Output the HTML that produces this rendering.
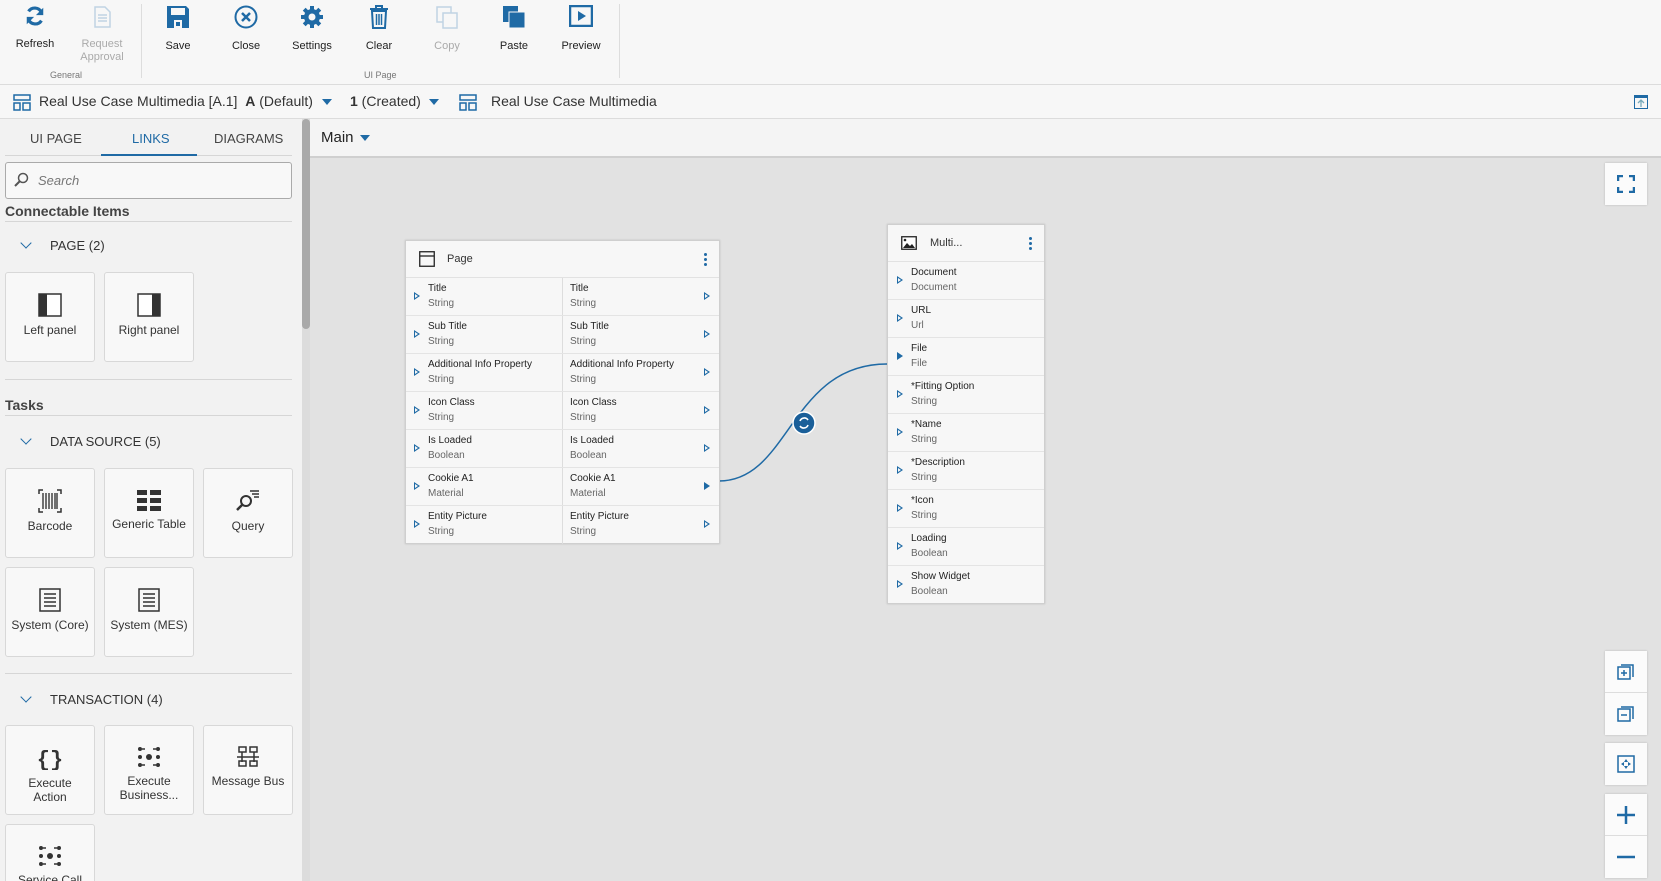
<!DOCTYPE html>
<html style="overflow:hidden;height:881px"><head><meta charset="utf-8"><style>
*{box-sizing:border-box;margin:0;padding:0}
body{width:1661px;height:881px;overflow:hidden;background:#f2f2f2;font-family:"Liberation Sans",sans-serif;color:#333;position:relative}
.a{position:absolute}
.tb{left:0;top:0;width:1661px;height:85px;background:#f7f7f7;border-bottom:1px solid #dcdcdc}
.btn{position:absolute;top:0;width:66px;text-align:center;font-size:11px;color:#222}
.btn svg{display:block;margin:5px auto 0}
.btn span{display:block;margin-top:11px;line-height:13px}
.dis{color:#aaa}
.glab{font-size:9px;color:#777}
.tbar{left:0;top:85px;width:1661px;height:34px;background:#f7f7f7;border-bottom:1px solid #dcdcdc;font-size:14px}
.left{left:0;top:119px;width:302px;height:762px;background:#f2f2f2;overflow:hidden}
.tab{position:absolute;top:12px;font-size:13px;color:#444}
.tile{position:absolute;width:90px;height:90px;background:#f8f8f8;border:1px solid #d8d8d8;border-radius:3px;text-align:center;font-size:12px;color:#333;line-height:14px}
.tile svg{display:block;margin:20px auto 6px}
.sec{position:absolute;left:20px;font-size:13px;color:#333}
.sec i{display:inline-block;width:8px;height:8px;border-right:1.5px solid #1f6aa5;border-bottom:1.5px solid #1f6aa5;transform:rotate(45deg);margin:0 20px 3px 2px}
.hr{position:absolute;left:5px;width:287px;height:1px;background:#d6d6d6}
.canvas{left:310px;top:156px;width:1351px;height:725px;background:#e2e2e2;border-top:2px solid #cfcfcf}
.node{position:absolute;background:#f7f7f7;border:1px solid #cfcfcf;box-shadow:0 0 2px rgba(0,0,0,.15)}
.nh{height:37px;border-bottom:1px solid #e2e2e2;font-size:11px;position:relative}
.row{height:38px;border-bottom:1px solid #e4e4e4;position:relative;font-size:10px}
.row b{font-weight:normal;position:absolute;top:5px;color:#222}
.row em{font-style:normal;position:absolute;top:20px;color:#666}
.tri{position:absolute;top:14px;width:0;height:0;border-top:4px solid transparent;border-bottom:4px solid transparent;border-left:6px solid #1f6aa5}
.tri.o::after{content:"";position:absolute;left:-5px;top:-2.5px;border-top:2.5px solid transparent;border-bottom:2.5px solid transparent;border-left:3.5px solid #f7f7f7}
.cb{position:absolute;left:1605px;width:42px;background:#fbfbfb;box-shadow:0 0 2px rgba(0,0,0,.2)}
.cb div{height:42px;display:flex;align-items:center;justify-content:center}
.kb{position:absolute;right:12px;top:12px;width:3px}
.kb i{display:block;width:3px;height:3px;background:#1f6aa5;border-radius:50%;margin-bottom:2px}
</style></head><body>
<div class="a tb">
 <div class="btn" style="left:2px"><svg width="22" height="22" viewBox="0 0 24 24"><path d="M19 8A8 8 0 0 0 5 7" stroke="#1f6aa5" stroke-width="3.5" fill="none"/><path d="M21 3v8h-8z" fill="#1f6aa5"/><path d="M5 16a8 8 0 0 0 14 1" stroke="#1f6aa5" stroke-width="3.5" fill="none"/><path d="M3 21v-8h8z" fill="#1f6aa5"/></svg><span>Refresh</span></div>
 <div class="btn dis" style="left:69px"><svg width="22" height="24" viewBox="0 0 22 24"><path d="M4 2h10l5 5v15H4z" fill="none" stroke="#c0d4e4" stroke-width="1.5"/><path d="M7 10h9M7 13h9M7 16h9" stroke="#c0d4e4" stroke-width="1.5"/></svg><span style="margin-top:9px">Request<br>Approval</span></div>
 <div class="a glab" style="left:50px;top:70px">General</div>
 <div class="a" style="left:141px;top:4px;width:1px;height:74px;background:#ddd"></div>
 <div class="btn" style="left:145px"><svg width="24" height="24" viewBox="0 0 24 24"><path d="M1 1h19l3 3v19H1z" fill="#1f6aa5"/><rect x="5" y="3" width="14" height="7" fill="#f7f7f7"/><rect x="8" y="15" width="8" height="8" fill="#f7f7f7"/><rect x="10" y="17" width="4" height="4" fill="#1f6aa5"/></svg><span>Save</span></div>
 <div class="btn" style="left:213px"><svg width="24" height="24" viewBox="0 0 24 24"><circle cx="12" cy="12" r="10.5" fill="none" stroke="#1f6aa5" stroke-width="2"/><path d="M8 8l8 8M16 8l-8 8" stroke="#1f6aa5" stroke-width="2.5"/></svg><span>Close</span></div>
 <div class="btn" style="left:279px"><svg width="24" height="24" viewBox="0 0 24 24"><circle cx="12" cy="12" r="8" fill="#1f6aa5"/><g stroke="#1f6aa5" stroke-width="4"><path d="M12 1v22M1 12h22M4.2 4.2l15.6 15.6M19.8 4.2L4.2 19.8"/></g><circle cx="12" cy="12" r="3.5" fill="#f7f7f7"/></svg><span>Settings</span></div>
 <div class="btn" style="left:346px"><svg width="22" height="24" viewBox="0 0 22 24"><path d="M2 4h18M8 4V1h6v3" stroke="#1f6aa5" stroke-width="2" fill="none"/><path d="M4 6h14l-1 17H5z" fill="none" stroke="#1f6aa5" stroke-width="2"/><path d="M8.5 9v11M11 9v11M13.5 9v11" stroke="#1f6aa5" stroke-width="1.5"/></svg><span>Clear</span></div>
 <div class="btn dis" style="left:414px"><svg width="24" height="24" viewBox="0 0 24 24"><rect x="2" y="2" width="14" height="15" fill="none" stroke="#c0d4e4" stroke-width="1.5"/><rect x="8" y="8" width="14" height="15" fill="#f7f7f7" stroke="#c0d4e4" stroke-width="1.5"/></svg><span>Copy</span></div>
 <div class="btn" style="left:481px"><svg width="24" height="24" viewBox="0 0 24 24"><rect x="1" y="1" width="15" height="16" fill="#1f6aa5"/><rect x="7" y="7" width="16" height="16" fill="#1f6aa5" stroke="#f7f7f7" stroke-width="1"/></svg><span>Paste</span></div>
 <div class="btn" style="left:548px"><svg width="24" height="22" viewBox="0 0 24 22"><rect x="1" y="1" width="22" height="20" fill="none" stroke="#1f6aa5" stroke-width="2.5"/><path d="M9 6v10l8-5z" fill="#1f6aa5"/></svg><span style="margin-top:13px">Preview</span></div>
 <div class="a glab" style="left:364px;top:70px">UI Page</div>
 <div class="a" style="left:619px;top:4px;width:1px;height:74px;background:#ddd"></div>
</div>
<div class="a tbar">
 <svg class="a" style="left:13px;top:9px" width="18" height="17" viewBox="0 0 18 17"><g fill="none" stroke="#1f6aa5" stroke-width="1.5"><rect x="1" y="1" width="16" height="5"/><rect x="1" y="9" width="6" height="7"/><rect x="10" y="9" width="7" height="7"/></g></svg>
 <div class="a" style="left:39px;top:8px">Real Use Case Multimedia [A.1]&nbsp;&nbsp;<b>A</b> (Default)</div>
 <div class="a" style="left:322px;top:14px;border-left:5px solid transparent;border-right:5px solid transparent;border-top:6px solid #1f6aa5"></div>
 <div class="a" style="left:350px;top:8px"><b>1</b> (Created)</div>
 <div class="a" style="left:429px;top:14px;border-left:5px solid transparent;border-right:5px solid transparent;border-top:6px solid #1f6aa5"></div>
 <svg class="a" style="left:459px;top:9px" width="18" height="17" viewBox="0 0 18 17"><g fill="none" stroke="#1f6aa5" stroke-width="1.5"><rect x="1" y="1" width="16" height="5"/><rect x="1" y="9" width="6" height="7"/><rect x="10" y="9" width="7" height="7"/></g></svg>
 <div class="a" style="left:491px;top:8px">Real Use Case Multimedia</div>
 <svg class="a" style="left:1634px;top:10px" width="14" height="14" viewBox="0 0 14 14"><rect x=".5" y=".5" width="13" height="13" fill="none" stroke="#1f6aa5"/><rect x="0" y="0" width="14" height="3" fill="#1f6aa5"/><path d="M7 12V5M4 8l3-3 3 3" stroke="#7ab" fill="none" stroke-width="1.3"/></svg>
</div>
<div class="a left">
 <div class="tab" style="left:30px">UI PAGE</div>
 <div class="tab" style="left:132px;color:#1f6aa5">LINKS</div>
 <div class="tab" style="left:214px">DIAGRAMS</div>
 <div class="a" style="left:5px;top:36px;width:287px;height:1px;background:#d6d6d6"></div>
 <div class="a" style="left:101px;top:35px;width:96px;height:2px;background:#1f6aa5"></div>
 <div class="a" style="left:5px;top:43px;width:287px;height:37px;border:1px solid #aaa;border-radius:3px;background:#f8f8f8"></div>
 <svg class="a" style="left:13px;top:53px" width="16" height="16" viewBox="0 0 16 16"><circle cx="10" cy="6" r="4.5" fill="none" stroke="#555" stroke-width="1.5"/><path d="M7 9l-5 5" stroke="#555" stroke-width="2"/></svg>
 <div class="a" style="left:38px;top:54px;font-size:13px;font-style:italic;color:#777">Search</div>
 <div class="a" style="left:5px;top:84px;font-size:14px;font-weight:bold;color:#444">Connectable Items</div>
 <div class="hr" style="top:102px"></div>
 <div class="sec" style="top:119px"><i></i>PAGE (2)</div>
 <div class="tile" style="left:5px;top:153px"><svg width="24" height="24" viewBox="0 0 24 24"><rect x="1" y="1" width="22" height="22" fill="#fff" stroke="#333" stroke-width="1.5"/><rect x="1" y="1" width="8" height="22" fill="#333"/></svg>Left panel</div>
 <div class="tile" style="left:104px;top:153px"><svg width="24" height="24" viewBox="0 0 24 24"><rect x="1" y="1" width="22" height="22" fill="#fff" stroke="#333" stroke-width="1.5"/><rect x="15" y="1" width="8" height="22" fill="#333"/></svg>Right panel</div>
 <div class="hr" style="top:260px"></div>
 <div class="a" style="left:5px;top:278px;font-size:14px;font-weight:bold;color:#444">Tasks</div>
 <div class="hr" style="top:296px"></div>
 <div class="sec" style="top:315px"><i></i>DATA SOURCE (5)</div>
 <div class="tile" style="left:5px;top:349px"><svg width="24" height="24" viewBox="0 0 24 24"><path d="M1 5V1h4M19 1h4v4M23 19v4h-4M5 23H1v-4" stroke="#333" fill="none" stroke-width="1.5"/><path d="M5 4v16M8 4v16M11 4v16M14 4v16M17 4v16M19 4v16" stroke="#444" stroke-width="1.5"/></svg>Barcode</div>
 <div class="tile" style="left:104px;top:349px"><svg width="24" height="22" viewBox="0 0 24 22" fill="#333"><rect x="0" y="1" width="10" height="5"/><rect x="13" y="1" width="11" height="5"/><rect x="0" y="9" width="10" height="5"/><rect x="13" y="9" width="11" height="5"/><rect x="0" y="17" width="10" height="5"/><rect x="13" y="17" width="11" height="5"/></svg>Generic Table</div>
 <div class="tile" style="left:203px;top:349px"><svg width="24" height="24" viewBox="0 0 24 24"><circle cx="10" cy="12" r="5" fill="none" stroke="#333" stroke-width="2"/><path d="M6.5 15.5L1 21" stroke="#333" stroke-width="2.5"/><path d="M14 2h9M16 5h7M18 8h5" stroke="#333" stroke-width="1.5"/></svg>Query</div>
 <div class="tile" style="left:5px;top:448px"><svg width="22" height="24" viewBox="0 0 22 24"><rect x="1" y="1" width="20" height="22" fill="none" stroke="#333" stroke-width="1.5"/><path d="M5 6h12M5 10h12M5 14h12M5 18h12" stroke="#333" stroke-width="1.5"/></svg>System (Core)</div>
 <div class="tile" style="left:104px;top:448px"><svg width="22" height="24" viewBox="0 0 22 24"><rect x="1" y="1" width="20" height="22" fill="none" stroke="#333" stroke-width="1.5"/><path d="M5 6h12M5 10h12M5 14h12M5 18h12" stroke="#333" stroke-width="1.5"/></svg>System (MES)</div>
 <div class="hr" style="top:554px"></div>
 <div class="sec" style="top:573px"><i></i>TRANSACTION (4)</div>
 <div class="tile" style="left:5px;top:606px"><svg width="24" height="24" viewBox="0 0 24 24"><text x="12" y="20" font-size="22" font-weight="bold" text-anchor="middle" fill="#333" font-family="Liberation Mono">{}</text></svg>Execute<br>Action</div>
 <div class="tile" style="left:104px;top:606px"><svg width="24" height="22" viewBox="0 0 24 22"><g fill="#333"><circle cx="3" cy="11" r="2"/><circle cx="21" cy="11" r="2"/><circle cx="12" cy="11" r="3"/><circle cx="3" cy="3" r="2"/><circle cx="21" cy="19" r="2"/><circle cx="3" cy="19" r="2"/><circle cx="21" cy="3" r="2"/></g><path d="M5 3h3M16 3h3M5 19h3M16 19h3" stroke="#333" stroke-width="1.5"/></svg>Execute<br>Business...</div>
 <div class="tile" style="left:203px;top:606px"><svg width="24" height="22" viewBox="0 0 24 22" fill="none" stroke="#333" stroke-width="1.5"><rect x="3" y="1" width="7" height="5"/><rect x="14" y="1" width="7" height="5"/><path d="M1 11h22M6 6v10M18 6v10"/><rect x="3" y="15" width="7" height="5"/><rect x="14" y="15" width="7" height="5"/></svg>Message Bus</div>
 <div class="tile" style="left:5px;top:705px"><svg width="24" height="22" viewBox="0 0 24 22"><g fill="#333"><circle cx="3" cy="11" r="2"/><circle cx="21" cy="11" r="2"/><circle cx="12" cy="11" r="3"/><circle cx="3" cy="3" r="2"/><circle cx="21" cy="19" r="2"/><circle cx="3" cy="19" r="2"/><circle cx="21" cy="3" r="2"/></g><path d="M5 3h3M16 3h3M5 19h3M16 19h3" stroke="#333" stroke-width="1.5"/></svg>Service Call</div>
</div>
<div class="a" style="left:302px;top:119px;width:8px;height:762px;background:#dcdcdc"></div>
<div class="a" style="left:302px;top:119px;width:8px;height:210px;background:#a9a9a9;border-radius:4px"></div>
<div class="a" style="left:310px;top:119px;width:1351px;height:37px;background:#f4f4f4"></div>
<div class="a" style="left:321px;top:129px;font-size:15px;color:#222">Main</div>
<div class="a" style="left:360px;top:135px;border-left:5px solid transparent;border-right:5px solid transparent;border-top:6px solid #1f6aa5"></div>
<div class="a canvas"></div>
<svg class="a" style="left:0;top:0" width="1661" height="881"><path d="M719 481C790 481 790 364 887 364" stroke="#1f6aa5" stroke-width="1.5" fill="none"/><circle cx="804" cy="423" r="11" fill="#1a5f99" stroke="#fff" stroke-width="1.5"/><path d="M808 420a4.5 4.5 0 0 0-8 1M800 426a4.5 4.5 0 0 0 8-1" stroke="#fff" stroke-width="1.6" fill="none"/></svg>
<div class="node" style="left:405px;top:240px;width:315px;height:304px">
 <div class="nh"><svg class="a" style="left:13px;top:10px" width="16" height="16" viewBox="0 0 16 16"><rect x=".75" y=".75" width="14.5" height="14.5" fill="none" stroke="#222" stroke-width="1.3"/><path d="M1 5h14" stroke="#222" stroke-width="1.3"/></svg><span class="a" style="left:41px;top:12px;color:#333">Page</span><div class="kb"><i></i><i></i><i></i></div></div>
 <div class="a" style="left:156px;top:37px;width:1px;height:266px;background:#ddd"></div>
 <div id="pr"></div>
</div>
<div class="node" style="left:887px;top:224px;width:158px;height:380px">
 <div class="nh"><svg class="a" style="left:13px;top:11px" width="16" height="14" viewBox="0 0 16 14"><rect x=".75" y=".75" width="14.5" height="12.5" fill="#fff" stroke="#222" stroke-width="1.3"/><path d="M2 12l4-5 3 3 2-2 3 4z" fill="#222"/><circle cx="4" cy="4" r="1.3" fill="#222"/></svg><span class="a" style="left:42px;top:12px;color:#333">Multi...</span><div class="kb"><i></i><i></i><i></i></div></div>
 <div id="mr"></div>
</div>
<div class="cb" style="top:163px"><div><svg width="18" height="18" viewBox="0 0 18 18" fill="none" stroke="#1f6aa5" stroke-width="2.5"><path d="M1 6V1h5M12 1h5v5M17 12v5h-5M6 17H1v-5"/></svg></div></div>
<div class="cb" style="top:651px"><div style="border-bottom:1px solid #ddd"><svg width="18" height="18" viewBox="0 0 18 18" fill="none" stroke="#1f6aa5" stroke-width="1.5"><rect x="1" y="4" width="12" height="12"/><path d="M4 2h12v12"/><path d="M7 7v6M4 10h6"/></svg></div><div><svg width="18" height="18" viewBox="0 0 18 18" fill="none" stroke="#1f6aa5" stroke-width="1.5"><rect x="1" y="4" width="12" height="12"/><path d="M4 2h12v12"/><path d="M4 10h6"/></svg></div></div>
<div class="cb" style="top:743px"><div><svg width="18" height="18" viewBox="0 0 18 18"><rect x="1" y="1" width="16" height="16" fill="none" stroke="#1f6aa5" stroke-width="1.5"/><path d="M9 4l-2 3h4zM9 14l-2-3h4zM4 9l3-2v4zM14 9l-3-2v4z" fill="#1f6aa5"/></svg></div></div>
<div class="cb" style="top:794px"><div style="border-bottom:1px solid #ddd"><svg width="20" height="20" viewBox="0 0 20 20"><path d="M10 1v18M1 10h18" stroke="#1f6aa5" stroke-width="2.5"/></svg></div><div><svg width="20" height="20"><path d="M1 10h18" stroke="#1f6aa5" stroke-width="2.5"/></svg></div></div>
<script>
var P=[["Title","String"],["Sub Title","String"],["Additional Info Property","String"],["Icon Class","String"],["Is Loaded","Boolean"],["Cookie A1","Material"],["Entity Picture","String"]];
var h="";P.forEach(function(r,i){h+='<div class="row"'+(i==6?' style="border-bottom:0"':'')+'><span class="tri o" style="left:8px"></span><b style="left:22px">'+r[0]+'</b><em style="left:22px">'+r[1]+'</em><b style="left:164px">'+r[0]+'</b><em style="left:164px">'+r[1]+'</em><span class="tri'+(i==5?'':' o')+'" style="left:298px"></span></div>'});
document.getElementById("pr").innerHTML=h;
var M=[["Document","Document"],["URL","Url"],["File","File"],["*Fitting Option","String"],["*Name","String"],["*Description","String"],["*Icon","String"],["Loading","Boolean"],["Show Widget","Boolean"]];
h="";M.forEach(function(r,i){h+='<div class="row"'+(i==8?' style="border-bottom:0"':'')+'><span class="tri'+(i==2?'':' o')+'" style="left:9px"></span><b style="left:23px">'+r[0]+'</b><em style="left:23px">'+r[1]+'</em></div>'});
document.getElementById("mr").innerHTML=h;
</script>
</body></html>
